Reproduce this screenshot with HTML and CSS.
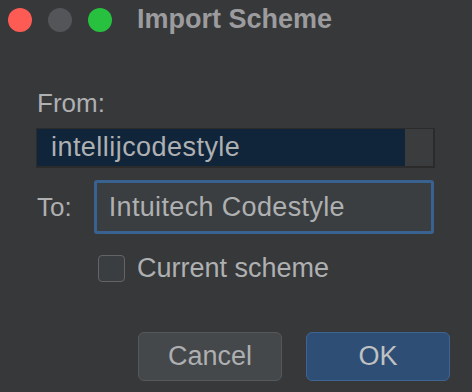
FILE: index.html
```html
<!DOCTYPE html>
<html>
<head>
  <title>Import Scheme</title>
  <link rel="stylesheet" href="styles.css">
</head>

<body>
  <div class="titlebar">
    <div class="lights">
      <span class="light light-close"></span>
      <span class="light light-min"></span>
      <span class="light light-max"></span>
    </div>
    <p class="title">Import Scheme</p>
  </div>

  <div class="form">
    <p class="label from-label">From:</p>

    <div class="scheme-list">
      <div class="scheme-item">intellijcodestyle</div>
      <div class="scroll-track"></div>
    </div>

    <div class="to-row">
      <p class="label to-label">To:</p>
      <div class="text-input">Intuitech Codestyle</div>
    </div>

    <div class="check-row">
      <span class="checkbox"></span>
      <span class="check-label">Current scheme</span>
    </div>

    <div class="button-row">
      <button class="dialog-button cancel-button">Cancel</button>
      <button class="dialog-button ok-button">OK</button>
    </div>
  </div>
</body>
</html>
```

FILE: styles.css
```css
body {
  background-color: #37383a;
  margin: 0;
  padding: 0;
  font-family: 'Liberation Sans', Arial, sans-serif;
  color: #aeb0b2;
}

.titlebar {
  display: flex;
  align-items: center;
  height: 40px;
  padding: 0 8px;
}

.lights {
  display: flex;
  gap: 16px;
}

.light {
  width: 24px;
  height: 24px;
  border-radius: 50%;
}

.light-close {
  background-color: #fe5b54;
}

.light-min {
  background-color: #545558;
}

.light-max {
  background-color: #28c13f;
}

.title {
  margin: 0 0 2px 25px;
  font-size: 27px;
  font-weight: bold;
  line-height: 38px;
  color: #9c9c9e;
}

.form {
  padding: 48px 22px 0 36px;
}

.label {
  margin: 0;
  font-size: 26px;
  line-height: 30px;
}

.from-label {
  padding-left: 1px;
}

.scheme-list {
  display: flex;
  width: 396px;
  height: 37px;
  margin-top: 10px;
  border: 2px solid #2b2b2c;
  border-left-width: 1px;
  border-top-width: 1px;
  background-color: #3a3c3e;
}

.scheme-item {
  flex: 1;
  background-color: #10243a;
  padding-left: 14px;
  font-size: 27px;
  letter-spacing: 0.45px;
  line-height: 37px;
}

.scroll-track {
  width: 28px;
}

.to-row {
  display: flex;
  align-items: center;
  gap: 22px;
  margin-top: 12px;
}

.to-label {
  padding-left: 1px;
}

.text-input {
  width: 322px;
  height: 48px;
  border: 3px solid #3a6291;
  border-radius: 3px;
  background-color: #3b3e40;
  padding-left: 12px;
  font-size: 27px;
  letter-spacing: 0.35px;
  line-height: 48px;
}

.check-row {
  display: flex;
  align-items: center;
  gap: 12px;
  margin-top: 20px;
  padding-left: 62px;
}

.checkbox {
  width: 25px;
  height: 25px;
  border: 1.5px solid #626467;
  border-radius: 4px;
  background-color: #3b3e40;
}

.check-label {
  font-size: 27px;
  line-height: 28px;
}

.button-row {
  display: flex;
  justify-content: flex-end;
  gap: 24px;
  margin-top: 50px;
}

.dialog-button {
  width: 144px;
  height: 49px;
  border-radius: 6px;
  font-family: 'Liberation Sans', Arial, sans-serif;
  font-size: 27px;
  cursor: pointer;
}

.cancel-button {
  background-color: #45484b;
  border: 1.5px solid #55585b;
  color: #adafb1;
}

.ok-button {
  background-color: #2f4e75;
  border: 1.5px solid #3e6494;
  color: #bfc1c3;
}
```
